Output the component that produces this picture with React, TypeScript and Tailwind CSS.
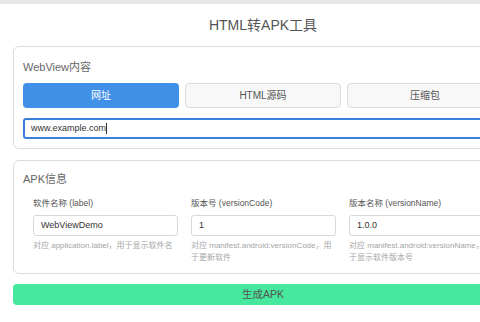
import React from 'react';

const fields = [
  { label: '软件名称 (label)', value: 'WebViewDemo', help: '对应 application.label，用于显示软件名' },
  { label: '版本号 (versionCode)', value: '1', help: '对应 manifest.android:versionCode，用于更新软件' },
  { label: '版本名称 (versionName)', value: '1.0.0', help: '对应 manifest.android:versionName，用于显示软件版本号' },
];

const App = () => {
  return (
    <div className="w-[480px] h-[322px] overflow-hidden bg-white font-['Liberation_Sans','Noto_Sans_CJK_SC',sans-serif]">
      <div className="w-[526px]">
        <div className="h-[4px] bg-[#e6e6e6]" />
        <h1 className="h-[42px] flex items-center justify-center text-[14px] text-[#555] font-normal">
          HTML转APK工具
        </h1>

        {/* WebView content */}
        <div className="mx-[13px] border border-[#dcdcdc] rounded-[6px] px-[9px] pt-[12px] pb-[9px]">
          <div className="h-[16px] leading-[16px] text-[11px] text-[#666]">WebView内容</div>
          <div className="mt-[8px] grid grid-cols-3 gap-[6px]">
            <button className="h-[25px] rounded-[4px] bg-[#4190e8] text-white text-[10px]">网址</button>
            <button className="h-[25px] rounded-[4px] bg-[#f8f8f8] border border-[#dadada] text-[#555] text-[10px]">HTML源码</button>
            <button className="h-[25px] rounded-[4px] bg-[#f8f8f8] border border-[#dadada] text-[#555] text-[10px]">压缩包</button>
          </div>
          <div className="mt-[10px] h-[21px] border-2 border-[#3a7fd9] rounded-[3px] flex items-center px-[6px] text-[9px] text-[#333]">
            www.example.com<span className="w-px h-[11px] bg-[#333]" />
          </div>
        </div>

        {/* APK info */}
        <div className="mx-[13px] mt-[11px] border border-[#dcdcdc] rounded-[6px] px-[9px] pt-[10px] pb-[9px]">
          <div className="h-[16px] leading-[16px] text-[11px] text-[#666]">APK信息</div>
          <div className="mt-[10px] px-[10px] grid grid-cols-[145px_145px_145px] gap-x-[13px]">
            {fields.map((f) => (
              <div key={f.label}>
                <div className="h-[12px] leading-[12px] text-[8.5px] text-[#555]">{f.label}</div>
                <div className="mt-[6px] h-[21px] border border-[#d8d8d8] rounded-[3px] flex items-center px-[7px] text-[9px] text-[#333]">
                  {f.value}
                </div>
                <p className="mt-[4px] leading-[12px] text-[8px] text-[#a5a5a5]">{f.help}</p>
              </div>
            ))}
          </div>
        </div>

        <button className="mx-[13px] mt-[10px] w-[500px] h-[21px] rounded-[4px] bg-[#46e89d] text-[10.5px] text-[#555]">
          生成APK
        </button>
      </div>
    </div>
  );
};

export default App;
